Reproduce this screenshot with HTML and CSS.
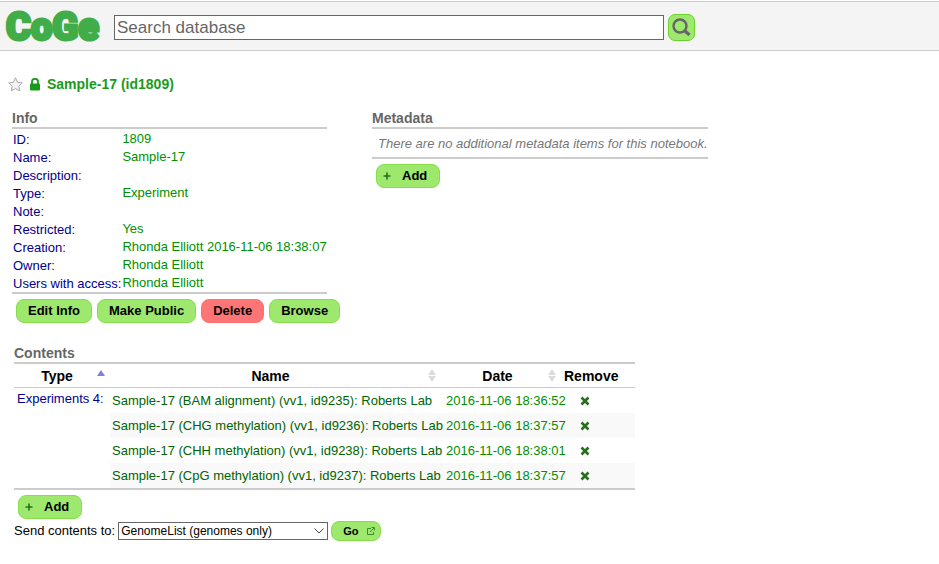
FILE: index.html
```html
<!DOCTYPE html>
<html lang="en">
<head>
<meta charset="utf-8">
<title>CoGe: Sample-17</title>
<link rel="stylesheet" href="styles.css">
</head>
<body>
<svg class="sprite" aria-hidden="true">
  <symbol id="plus" viewBox="0 0 8 8"><path d="M4 0.5v7M0.5 4h7" stroke="#286e1f" stroke-width="1.6"/></symbol>
  <symbol id="cross" viewBox="0 0 10 10"><path d="M1.5 1.5l7 7M8.5 1.5l-7 7" stroke="#286e1f" stroke-width="2.6"/></symbol>
  <symbol id="sort" viewBox="0 0 8 13"><path d="M4 0l4 6H0zM0 7h8l-4 6z" fill="#dcdcdc"/></symbol>
</svg>

<header class="topbar">
  <a class="logo" href="#">CoGe</a>
  <form class="search">
    <input class="search-box" type="text" placeholder="Search database" aria-label="Search database">
    <button class="search-button" type="button" aria-label="Search">
      <svg width="19" height="19" viewBox="0 0 19 19" fill="none" stroke="#666"><circle cx="8" cy="8" r="6.500" stroke-width="2.400"/><path d="M12.500 12.500l5 4.500" stroke-width="3.200"/></svg>
    </button>
  </form>
</header>

<main class="page">
  <h1 class="title">
    <svg class="star" width="15" height="15" viewBox="0 0 15 15"><path d="M7.500 .8l2.100 4.500 4.700.6-3.500 3.300.9 4.700-4.200-2.300-4.200 2.300.9-4.700L.7 5.900l4.700-.6z" fill="#f3f3f3" stroke="#aaa"/></svg>
    <svg width="10" height="13" viewBox="0 0 10 13"><path d="M2 6V3.800a3 3 0 0 1 6 0V6" fill="none" stroke="#1a9a1a" stroke-width="1.800"/><rect y="5.500" width="10" height="7" rx="1" fill="#1a9a1a"/></svg>
    <span>Sample-17 (id1809)</span>
  </h1>

  <div class="panels">
    <section class="info">
      <h2>Info</h2>
      <table class="fields">
        <tr><th>ID<i>:</i></th><td>1809</td></tr>
        <tr><th>Name<i>:</i></th><td>Sample-17</td></tr>
        <tr><th>Description<i>:</i></th><td></td></tr>
        <tr><th>Type<i>:</i></th><td>Experiment</td></tr>
        <tr><th>Note<i>:</i></th><td></td></tr>
        <tr><th>Restricted<i>:</i></th><td>Yes</td></tr>
        <tr><th>Creation<i>:</i></th><td>Rhonda Elliott 2016-11-06 18:38:07</td></tr>
        <tr><th>Owner<i>:</i></th><td>Rhonda Elliott</td></tr>
        <tr><th>Users with access<i>:</i></th><td>Rhonda Elliott</td></tr>
      </table>
      <div class="actions">
        <button class="btn" type="button">Edit Info</button>
        <button class="btn" type="button">Make Public</button>
        <button class="btn danger" type="button">Delete</button>
        <button class="btn" type="button">Browse</button>
      </div>
    </section>

    <section class="metadata">
      <h2>Metadata</h2>
      <p class="empty">There are no additional metadata items for this notebook.</p>
      <div class="actions">
        <button class="btn add" type="button"><svg width="8" height="8"><use href="#plus"/></svg>Add</button>
      </div>
    </section>
  </div>

  <section class="contents">
    <h2>Contents</h2>
    <table class="items">
      <colgroup><col class="c-type"><col class="c-name"><col class="c-date"><col class="c-remove"></colgroup>
      <thead>
        <tr>
          <th><div class="head">Type<svg class="up" width="8" height="6" viewBox="0 0 8 6"><path d="M4 0l4 6H0z" fill="#8080dc"/></svg></div></th>
          <th><div class="head">Name<svg width="8" height="13"><use href="#sort"/></svg></div></th>
          <th><div class="head">Date<svg width="8" height="13"><use href="#sort"/></svg></div></th>
          <th class="remove">Remove</th>
        </tr>
      </thead>
      <tbody>
        <tr>
          <th class="type" rowspan="4">Experiments 4<i>:</i></th>
          <td class="name"><a href="#">Sample-17 (BAM alignment) (vv1, id9235): Roberts Lab</a></td><td class="date">2016-11-06 18:36:52</td>
          <td class="remove"><button class="x" type="button" aria-label="Remove"><svg width="10" height="10"><use href="#cross"/></svg></button></td>
        </tr>
        <tr class="odd">
          <td class="name"><a href="#">Sample-17 (CHG methylation) (vv1, id9236): Roberts Lab</a></td><td class="date">2016-11-06 18:37:57</td>
          <td class="remove"><button class="x" type="button" aria-label="Remove"><svg width="10" height="10"><use href="#cross"/></svg></button></td>
        </tr>
        <tr>
          <td class="name"><a href="#">Sample-17 (CHH methylation) (vv1, id9238): Roberts Lab</a></td><td class="date">2016-11-06 18:38:01</td>
          <td class="remove"><button class="x" type="button" aria-label="Remove"><svg width="10" height="10"><use href="#cross"/></svg></button></td>
        </tr>
        <tr class="odd">
          <td class="name"><a href="#">Sample-17 (CpG methylation) (vv1, id9237): Roberts Lab</a></td><td class="date">2016-11-06 18:37:57</td>
          <td class="remove"><button class="x" type="button" aria-label="Remove"><svg width="10" height="10"><use href="#cross"/></svg></button></td>
        </tr>
      </tbody>
    </table>
    <div class="actions">
      <button class="btn add" type="button"><svg width="8" height="8"><use href="#plus"/></svg>Add</button>
    </div>
    <form class="send">
      <label for="target">Send contents to:</label>
      <select id="target"><option>GenomeList (genomes only)</option></select>
      <button class="btn go" type="button">Go<svg width="8" height="8" viewBox="0 0 8 8" fill="none" stroke="#3b8a30"><path d="M4 1.500H.5v6h6V5M3 5l4-4M4.500.5h3v3"/></svg></button>
    </form>
  </section>
</main>
</body>
</html>
```

FILE: styles.css
```css
* { box-sizing: border-box; }

body {
  margin: 0;
  background: #fff;
  color: #000;
  font: 13px/18px "Liberation Sans", Arial, sans-serif;
}

svg { display: block; flex: none; }
.sprite { position: absolute; width: 0; height: 0; }
button, input, select { font-family: inherit; }
a { text-decoration: none; }

.topbar {
  display: flex;
  align-items: center;
  gap: 14px;
  height: 50px;
  margin-top: 1px;
  padding: 2px 6px 0;
  background: #f4f4f4;
  border-top: 1px solid #ccc;
  border-bottom: 1px solid #ccc;
}

.logo {
  flex: none;
  width: 94px;
  color: #41ad49;
  font: 900 38px/46px Impact, Roboto, sans-serif;
  -webkit-text-stroke: 3px #41ad49;
}

.search { display: flex; flex: 1; align-items: center; gap: 4px; }
.search-box {
  flex: 1;
  min-width: 0;
  max-width: 550px;
  height: 25px;
  padding: 1px 2px 0;
  border: 1px solid #666;
  background: #fff;
  font-size: 17px;
}
.search-box::placeholder { color: #666; }
.search-button {
  width: 27px;
  height: 27px;
  padding: 3px;
  border: 1px solid #6bd12f;
  border-radius: 7px;
  background: #9de86d;
}

.page { padding: 24px 8px; }

.title {
  display: flex;
  align-items: center;
  gap: 7px;
  margin: 0 0 17px;
  color: #1a9a1a;
  font-size: 14px;
  line-height: 18px;
}

h2 {
  margin: 0;
  color: #666;
  font-size: 14px;
  line-height: 17px;
}

.panels { display: grid; grid-template-columns: 331px auto; column-gap: 29px; justify-content: start; align-items: start; margin-left: 4px; }

.fields {
  width: 308px;
  padding-top: 1px;
  border-spacing: 0;
  border-top: 2px solid #ccc;
  border-bottom: 2px solid #ccc;
}
.fields th, .fields td { padding: 0; height: 18px; text-align: left; font-weight: normal; white-space: nowrap; }
.fields th { padding: 2px 1px 0; color: #00008b; line-height: 16px; }
i { color: #222; font-style: normal; }
.fields td { color: #009000; }

.actions { display: flex; gap: 5px; padding: 5px 4px 0; }

.btn {
  height: 24px;
  padding: 0 11px;
  border: 1px solid #84df4a;
  border-radius: 8px;
  background: #9de86d;
  color: #000;
  font-size: 13px;
  font-weight: bold;
  line-height: 20px;
  white-space: nowrap;
}
.danger { background: #ff7575; border-color: #ff7070; }
.add { display: flex; align-items: center; gap: 11px; padding: 0 12px 0 6px; }

.empty {
  margin: 0;
  padding: 6px 0 4px 6px;
  border-top: 2px solid #ccc;
  border-bottom: 2px solid #ccc;
  color: #777;
  font-style: italic;
}

.contents { margin: 22px 0 0 6px; }
.items {
  width: 621px;
  table-layout: fixed;
  border-spacing: 0;
  border-top: 2px solid #ccc;
  border-bottom: 2px solid #ccc;
}
.c-type { width: 96px; }
.c-name { width: 334px; }
.c-date { width: 120px; }
.c-remove { width: 71px; }
.items th, .items td { padding: 0 3px; text-align: left; white-space: nowrap; }
.items thead th { height: 24px; padding-right: 8px; border-bottom: 1px solid #ccc; font-size: 14px; }
.items thead th:first-child { padding-right: 5px; }
.items .head { display: grid; grid-template-columns: 1fr 8px; align-items: center; text-align: center; }
.items .up { align-self: start; margin-top: 3px; }
.items tbody td { height: 25px; }
.items tbody .name { padding: 0 0 0 2px; }
.items tbody a { color: #006400; }
.items tbody .date { padding: 0 0 0 2px; color: #009000; }
.items thead .remove { padding: 0; }
.items .type { padding-top: 2px; color: #00008b; font-weight: normal; vertical-align: top; }
.odd td { background: #f9f9f9; }
.items td.remove { padding-left: 16px; }
.x { display: block; padding: 0; border: 0; background: none; }

.send { display: flex; align-items: center; gap: 3px; margin-top: 2px; }
#target {
  width: 210px;
  height: 18px;
  padding: 0 2px;
  border: 1px solid #666;
  border-radius: 0;
  appearance: none;
  background: #fff url("data:image/svg+xml,%3Csvg xmlns='http://www.w3.org/2000/svg' width='10' height='6'%3E%3Cpath d='M.5.5L5 5 9.500.5' fill='none' stroke='%23444'/%3E%3C/svg%3E") no-repeat right 3px center;
  font-size: 12px;
}
.go { display: flex; align-items: center; gap: 9px; height: 20px; padding: 0 5px 0 11px; font-size: 11px; }
```
